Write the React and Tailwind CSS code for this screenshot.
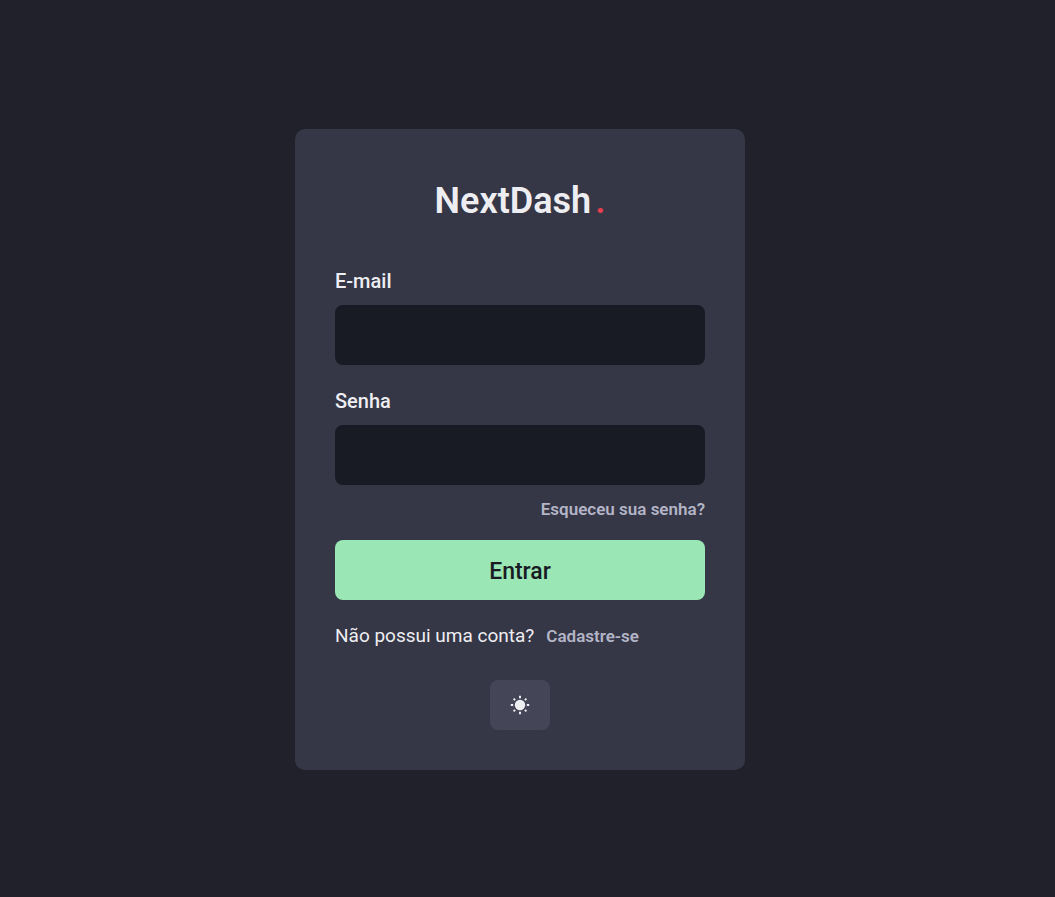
import { useState } from "react";

function Field({ id, label, type }) {
  return (
    <div className="flex flex-col gap-2">
      <label htmlFor={id} className="text-xl leading-8 font-medium">
        {label}
      </label>
      <input
        id={id}
        name={id}
        type={type}
        className="h-[60px] w-full rounded-lg bg-[#181b23] px-4 text-lg outline-none focus:ring-2 focus:ring-[#9ae6b4]"
      />
    </div>
  );
}

function SunIcon() {
  return (
    <svg viewBox="0 0 20 20" className="size-5" fill="currentColor" aria-hidden="true">
      <circle cx="10" cy="10" r="5.2" />
      <g stroke="currentColor" strokeWidth="2">
        <path d="M10 .8v2.4M10 16.8v2.4M.8 10h2.4M16.8 10h2.4" />
        <path d="M3.6 3.6l1.5 1.5M14.9 14.9l1.5 1.5M3.6 16.4l1.5-1.5M14.9 5.1l1.5-1.5" />
      </g>
    </svg>
  );
}

export default function App() {
  const [pressed, setPressed] = useState(false);

  return (
    <main className="flex min-h-screen items-center justify-center bg-[#21212b] pt-0.5 pr-[15px] font-['Roboto',sans-serif] text-[#eeeef2]">
      <form
        onSubmit={(event) => event.preventDefault()}
        className="flex w-full max-w-[450px] flex-col rounded-[10px] bg-[#353646] p-10"
      >
        <h1 className="flex justify-center gap-1 text-4xl leading-[64px] font-semibold">
          NextDash<span className="text-[#e53e4e]">.</span>
        </h1>
        <div className="mt-8 flex flex-col gap-5">
          <Field id="email" label="E-mail" type="email" />
          <Field id="password" label="Senha" type="password" />
        </div>
        <a href="#recuperar" className="mt-2 self-end text-[17px] leading-8 font-semibold text-[#b3b5c6]">
          Esqueceu sua senha?
        </a>
        <button
          type="submit"
          className="mt-[15px] h-[60px] rounded-lg bg-[#9ae6b4] pt-1 text-[23px] font-medium text-[#181b23]"
        >
          Entrar
        </button>
        <p className="mt-5 flex items-center gap-3 text-[19px] leading-8">
          Não possui uma conta?
          <a href="#cadastro" className="text-[17px] leading-8 font-semibold text-[#b3b5c6]">
            Cadastre-se
          </a>
        </p>
        <button
          type="button"
          aria-label="Alternar tema"
          aria-pressed={pressed}
          onClick={() => setPressed(!pressed)}
          className="mt-7 flex h-[50px] w-[60px] items-center justify-center self-center rounded-lg bg-[#444556]"
        >
          <SunIcon />
        </button>
      </form>
    </main>
  );
}
